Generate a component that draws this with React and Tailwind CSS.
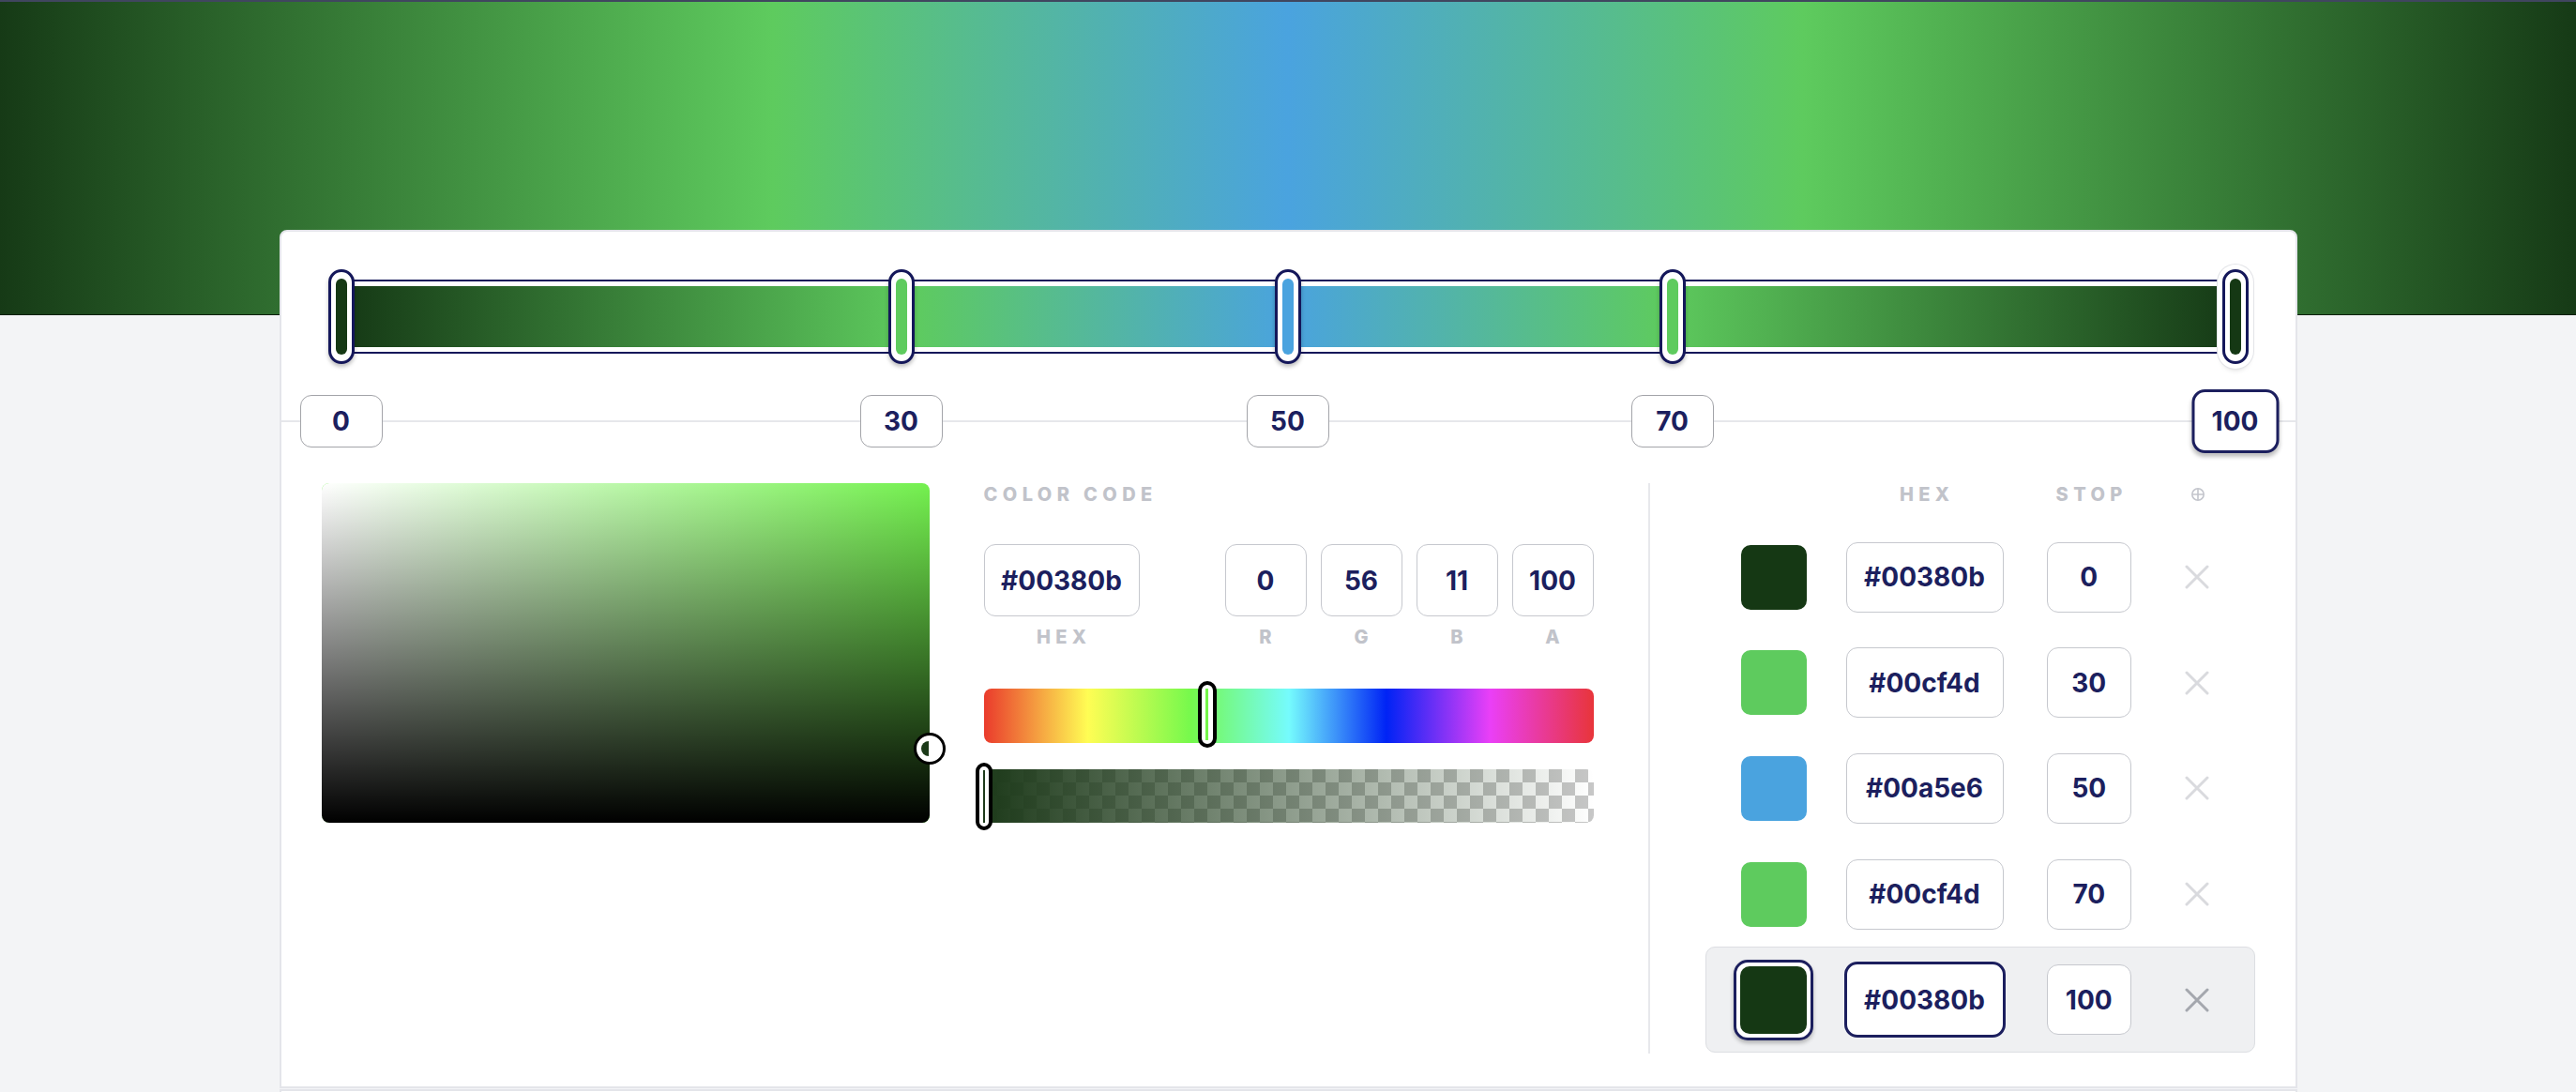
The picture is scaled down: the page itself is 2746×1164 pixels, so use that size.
import React from "react";

const stops = [
  { value: 0, hex: "#00380b", fill: "bg-[#153814]", thumb: "left-[0px]", box: "left-[64px]" },
  { value: 30, hex: "#00cf4d", fill: "bg-[#5ecb5e]", thumb: "left-[597px]", box: "left-[661px]" },
  { value: 50, hex: "#00a5e6", fill: "bg-[#4aa3df]", thumb: "left-[1009px]", box: "left-[1073px]" },
  { value: 70, hex: "#00cf4d", fill: "bg-[#5ecb5e]", thumb: "left-[1419px]", box: "left-[1483px]" },
  { value: 100, hex: "#00380b", fill: "bg-[#153814]", thumb: "left-[2019px]", box: "left-[2083px]", active: true },
];

const Cross = ({ className }) => (
  <svg width="26" height="26" viewBox="0 0 26 26" className={className}>
    <path d="M2 2 L24 24 M24 2 L2 24" stroke="currentColor" strokeWidth="3" strokeLinecap="round" />
  </svg>
);

const PlusCircle = () => (
  <svg width="16" height="16" viewBox="0 0 16 16" className="text-[#c3c5cc]">
    <circle cx="8" cy="8" r="6.2" fill="none" stroke="currentColor" strokeWidth="1.6" />
    <path d="M8 2 V14 M2 8 H14" stroke="currentColor" strokeWidth="1.6" />
  </svg>
);

const Label = ({ children, className = "" }) => (
  <span className={"text-[20px] font-extrabold uppercase tracking-[0.27em] text-[#c1c3ca] " + className}>{children}</span>
);

export default function App() {
  return (
    <div className="min-h-screen bg-[#f3f4f6] font-['Inter',sans-serif]">
      {/* gradient header */}
      <div className="h-[336px] border-t-2 border-b border-t-[#40465f] border-b-[#0c1e0c] bg-[linear-gradient(to_right,#163a16_0%,#5ecb5e_30%,#4aa3df_50%,#5ecb5e_70%,#163a16_100%)]" />

      {/* editor card */}
      <div className="relative mx-auto -mt-[91px] h-[915px] w-[2151px] rounded-t-[8px] border-2 border-[#e4e5ea] bg-white">
        {/* gradient track */}
        <div className="px-[64px] pt-[40px]">
          <div className="relative h-[101px] pt-[11px]">
            <div className="h-[79px] rounded-[4px] border-2 border-[#14175a] bg-white p-[5px]">
              <div className="h-full w-full bg-[linear-gradient(to_right,#163a16_0%,#5ecb5e_30%,#4aa3df_50%,#5ecb5e_70%,#163a16_100%)]" />
            </div>
            {stops.map((s, i) => (
              <div
                key={i}
                className={
                  "absolute top-0 flex h-[101px] w-[28px] -translate-x-1/2 items-center justify-center rounded-full border-[3px] border-[#14175a] bg-white " +
                  s.thumb +
                  (s.active
                    ? " shadow-[0_0_0_5px_#fff,0_0_0_6px_#e3e4e8,0_5px_6px_rgba(0,0,0,0.25)]"
                    : " shadow-[0_3px_4px_rgba(0,0,0,0.25)]")
                }
              >
                <div className={"h-[81px] w-[12px] rounded-full " + s.fill} />
              </div>
            ))}
          </div>
        </div>

        {/* stop values */}
        <div className="relative mt-[27px] h-[68px]">
          <div className="absolute inset-x-0 top-[33px] h-[2px] bg-[#e6e7eb]" />
          {stops.map((s, i) => (
            <div
              key={i}
              className={
                "absolute top-1/2 flex -translate-x-1/2 -translate-y-1/2 items-center justify-center bg-white text-[28px] font-bold text-[#1c1f5e] " +
                s.box +
                (s.active
                  ? " h-[68px] w-[93px] rounded-[14px] border-[3.5px] border-[#1c1f5e] shadow-[0_4px_4px_rgba(0,0,0,0.25)]"
                  : " h-[56px] w-[88px] rounded-[12px] border-[1.5px] border-[#a3a4a9]")
              }
            >
              {s.value}
            </div>
          ))}
        </div>

        {/* picker + codes + stop list */}
        <div className="mt-[32px] flex px-[43px]">
          {/* saturation / value area */}
          <div className="relative h-[362px] w-[648px] flex-none">
            <div className="h-full w-full overflow-hidden rounded-[8px] bg-[#74f14f]">
              <div className="h-full w-full bg-[linear-gradient(to_right,#fff,rgba(255,255,255,0))]">
                <div className="h-full w-full bg-[linear-gradient(to_top,#000,rgba(0,0,0,0))]" />
              </div>
            </div>
            <div className="absolute left-[631px] top-[266px] flex h-[34px] w-[34px] items-center justify-start rounded-full border-[3.5px] border-black bg-white pl-[5px]">
              <div className="h-[16px] w-[8px] rounded-l-full bg-[#1b3a18]" />
            </div>
          </div>

          {/* color code */}
          <div className="ml-[58px] w-[650px] flex-none">
            <div className="flex h-[24px] items-center">
              <Label>Color code</Label>
            </div>
            <div className="mt-[41px] flex">
              <div className="flex h-[77px] w-[166px] items-center justify-center rounded-[12px] border-[1.5px] border-[#c6c8ce] text-[28px] font-bold text-[#1c1f5e]">
                #00380b
              </div>
              <div className="ml-auto flex gap-[15px]">
                {["0", "56", "11", "100"].map((v) => (
                  <div
                    key={v}
                    className="flex h-[77px] w-[87px] items-center justify-center rounded-[12px] border-[1.5px] border-[#c6c8ce] text-[28px] font-bold text-[#1c1f5e]"
                  >
                    {v}
                  </div>
                ))}
              </div>
            </div>
            <div className="mt-[10px] flex h-[24px] items-center">
              <div className="w-[166px] text-center">
                <Label className="pl-[0.27em]">Hex</Label>
              </div>
              <div className="ml-auto flex gap-[15px]">
                {["R", "G", "B", "A"].map((l) => (
                  <div key={l} className="w-[87px] text-center">
                    <Label className="pl-[0.27em]">{l}</Label>
                  </div>
                ))}
              </div>
            </div>

            {/* hue */}
            <div className="relative mt-[43px] h-[58px] rounded-[8px] bg-[linear-gradient(to_right,#ea3b2c_0%,#fffd54_17%,#75f94c_34%,#75fbfd_50%,#0023f5_66%,#ea3ff7_83%,#e8353a_100%)]">
              <div className="absolute left-[228px] top-[-8px] flex h-[71px] w-[20px] items-center justify-center rounded-full border-[4px] border-black bg-white">
                <div className="h-[55px] w-[3px] bg-[#74f54a]" />
              </div>
            </div>

            {/* alpha */}
            <div className="relative mt-[28px] h-[57px]">
              <div className="relative h-full overflow-hidden rounded-[8px] bg-[conic-gradient(#c7c7c7_25%,#fff_0_50%,#c7c7c7_0_75%,#fff_0)] bg-[length:28px_28px]">
                <div className="absolute inset-0 bg-[linear-gradient(to_right,#1d3a1a,rgba(29,58,26,0))]" />
              </div>
              <div className="absolute left-[-9px] top-[-7px] flex h-[72px] w-[18px] items-center justify-center rounded-full border-[4px] border-black bg-white">
                <div className="h-[56px] w-[2px] bg-[#1d3a1a]" />
              </div>
            </div>
          </div>

          {/* divider */}
          <div className="ml-[58px] h-[608px] w-[2px] flex-none bg-[#e7e8ec]" />

          {/* stop list */}
          <div className="ml-[59px] w-[586px] flex-none">
            <div className="flex h-[24px] items-center pl-[38px]">
              <div className="w-[70px]" />
              <div className="ml-[42px] w-[168px] text-center">
                <Label className="pl-[0.27em]">Hex</Label>
              </div>
              <div className="ml-[46px] w-[91px] text-center">
                <Label className="pl-[0.27em]">Stop</Label>
              </div>
              <div className="ml-[9px] flex w-[122px] justify-center">
                <PlusCircle />
              </div>
            </div>

            <div className="mt-[20px]">
              {stops.map((s, i) => (
                <div
                  key={i}
                  className={
                    "flex h-[112.6px] items-center rounded-[10px] border-[1.5px] pl-[37px] " +
                    (s.active ? "border-[#dcdee2] bg-[#eff0f2]" : "border-transparent")
                  }
                >
                  <div className="flex w-[70px] justify-center">
                    {s.active ? (
                      <div className="h-[86px] w-[85px] flex-none rounded-[15px] border-[3px] border-[#1c1f5e] bg-white p-[4px] shadow-[0_3px_4px_rgba(0,0,0,0.25)]">
                        <div className={"h-full w-full rounded-[10px] " + s.fill} />
                      </div>
                    ) : (
                      <div className={"h-[69px] w-[70px] flex-none rounded-[10px] " + s.fill} />
                    )}
                  </div>
                  <div className="ml-[42px] flex w-[168px] justify-center">
                    <div
                      className={
                        "flex flex-none items-center justify-center bg-white text-[28px] font-bold text-[#1c1f5e] " +
                        (s.active
                          ? "h-[81px] w-[172px] rounded-[14px] border-[3.5px] border-[#1c1f5e]"
                          : "h-[75px] w-[168px] rounded-[12px] border-[1.5px] border-[#c6c8ce]")
                      }
                    >
                      {s.hex}
                    </div>
                  </div>
                  <div className="ml-[46px] flex h-[75px] w-[91px] items-center justify-center rounded-[12px] border-[1.5px] border-[#c6c8ce] bg-white text-[28px] font-bold text-[#1c1f5e]">
                    {s.value}
                  </div>
                  <div className="ml-[9px] flex w-[122px] justify-center">
                    <Cross className={s.active ? "text-[#a4a7ae]" : "text-[#d9dade]"} />
                  </div>
                </div>
              ))}
            </div>
          </div>
        </div>
      </div>

      <div className="mx-auto mt-[1px] h-[40px] w-[2151px] border-x-2 border-t-2 border-[#e4e5ea] bg-white" />
    </div>
  );
}
